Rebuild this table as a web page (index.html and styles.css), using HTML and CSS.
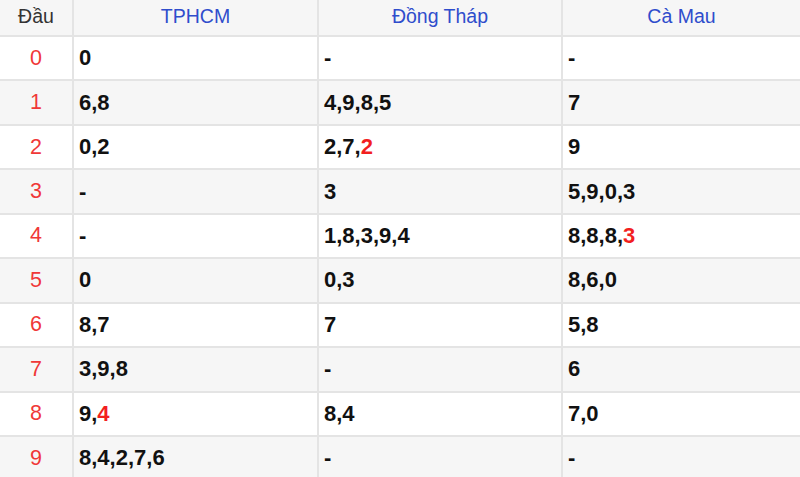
FILE: index.html
```html
<!DOCTYPE html>
<html lang="vi">
<head>
<meta charset="utf-8">
<title>Lô tô đầu</title>
<link rel="stylesheet" href="styles.css">
</head>
<body>
<table class="loto">
  <colgroup>
    <col class="c-head"><col class="c-a"><col class="c-b"><col class="c-c">
  </colgroup>
  <thead>
    <tr><th class="dau">Đầu</th><th>TPHCM</th><th>Đồng Tháp</th><th>Cà Mau</th></tr>
  </thead>
  <tbody>
    <tr><td class="dau">0</td><td>0</td><td>-</td><td>-</td></tr>
    <tr><td class="dau">1</td><td>6,8</td><td>4,9,8,5</td><td>7</td></tr>
    <tr><td class="dau">2</td><td>0,2</td><td>2,7,<span class="hl">2</span></td><td>9</td></tr>
    <tr><td class="dau">3</td><td>-</td><td>3</td><td>5,9,0,3</td></tr>
    <tr><td class="dau">4</td><td>-</td><td>1,8,3,9,4</td><td>8,8,8,<span class="hl">3</span></td></tr>
    <tr><td class="dau">5</td><td>0</td><td>0,3</td><td>8,6,0</td></tr>
    <tr><td class="dau">6</td><td>8,7</td><td>7</td><td>5,8</td></tr>
    <tr><td class="dau">7</td><td>3,9,8</td><td>-</td><td>6</td></tr>
    <tr><td class="dau">8</td><td>9,<span class="hl">4</span></td><td>8,4</td><td>7,0</td></tr>
    <tr><td class="dau">9</td><td>8,4,2,7,6</td><td>-</td><td>-</td></tr>
  </tbody>
</table>
</body>
</html>
```

FILE: styles.css
```css
html, body {
  margin: 0;
  padding: 0;
  background: #ffffff;
}

.loto {
  width: 800px;
  border-collapse: separate;
  border-spacing: 0;
  table-layout: fixed;
  font-family: "Liberation Sans", Arial, sans-serif;
}

.c-head { width: 74px; }
.c-a { width: 245px; }
.c-b { width: 244px; }
.c-c { width: 237px; }

.loto th,
.loto td {
  box-sizing: border-box;
  border-right: 2px solid #e4e4e4;
  border-bottom: 2px solid #e4e4e4;
  padding: 0 0 0 5px;
  vertical-align: middle;
}

.loto th:last-child,
.loto td:last-child {
  border-right: none;
}

.loto th {
  height: 37px;
  background: #f6f6f6;
  font-weight: normal;
  font-size: 19.5px;
  color: #2f4dcc;
  text-align: center;
  padding: 0 0 3px 0;
}

.loto th.dau {
  color: #333333;
}

.loto td {
  height: 44.45px;
  font-size: 22px;
  font-weight: bold;
  color: #111111;
}

.loto td.dau {
  font-weight: normal;
  font-size: 21.5px;
  color: #f03838;
  text-align: center;
  padding: 0;
}

.loto tbody tr:nth-child(even) td {
  background: #f6f6f6;
}

.hl {
  color: #f21f1f;
}
```
